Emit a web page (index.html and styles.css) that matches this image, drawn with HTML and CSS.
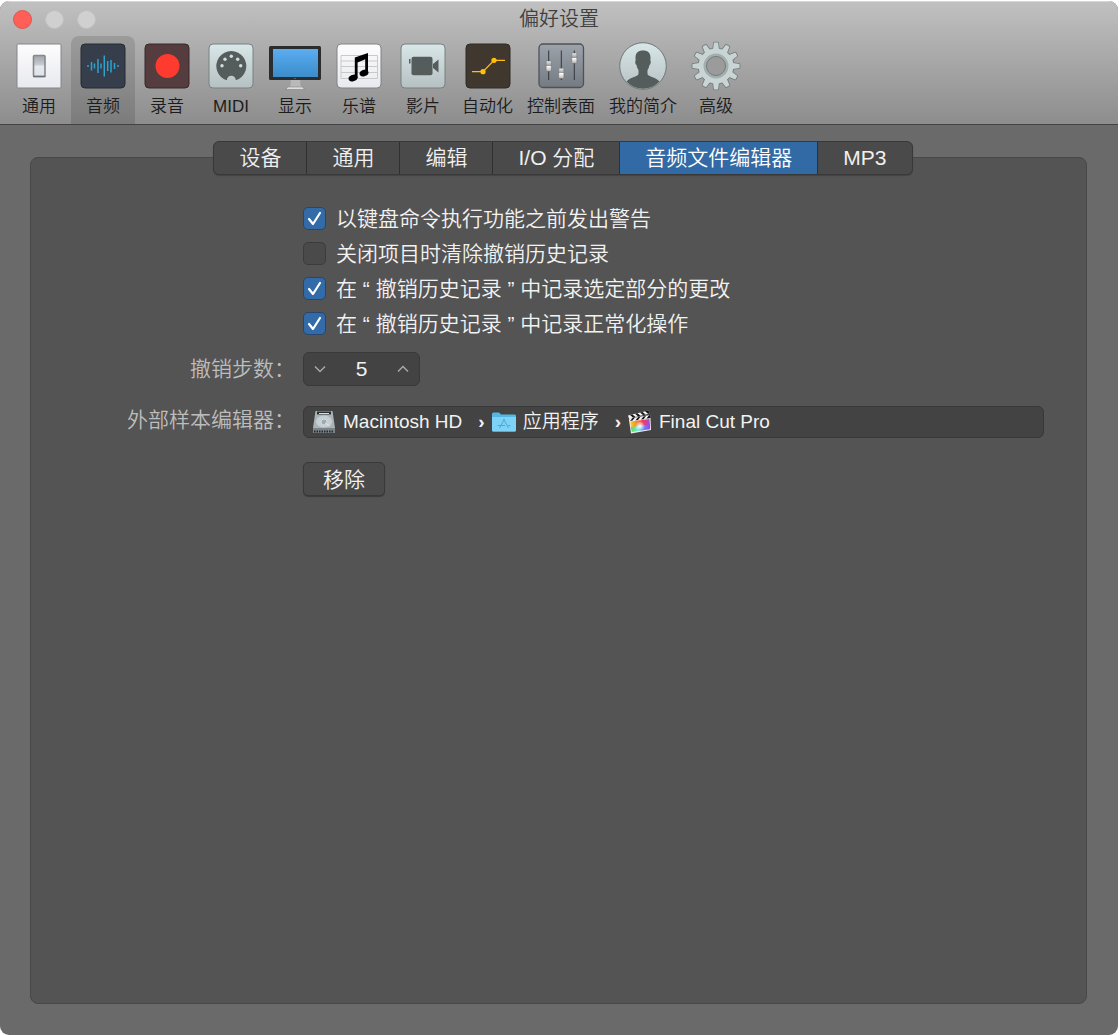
FILE: index.html
```
<!DOCTYPE html>
<html lang="zh-CN">
<head>
    <meta charset="UTF-8">
    <meta name="viewport" content="width=device-width, initial-scale=1.0">
    <title>偏好设置</title>
    <link rel="stylesheet" href="styles.css">
</head>
<body>

<div class="window">

    <header class="header">
        <div class="titlebar">
            <div class="lights">
                <button class="light close" aria-label="关闭"></button>
                <button class="light" aria-label="最小化"></button>
                <button class="light" aria-label="缩放"></button>
            </div>
            <h1 class="title">偏好设置</h1>
        </div>

        <nav class="toolbar">
            <button class="tool">
                <svg width="50" height="50" viewBox="0 0 50 50">
                    <defs>
                        <linearGradient id="white" x1="0" y1="0" x2="0" y2="1"><stop offset="0" stop-color="#fdfdfe"/><stop offset="1" stop-color="#e8e9ee"/></linearGradient>
                        <linearGradient id="pale" x1="0" y1="0" x2="0" y2="1"><stop offset="0" stop-color="#d9e7e9"/><stop offset="1" stop-color="#b5c0c1"/></linearGradient>
                        <linearGradient id="metal" x1="0" y1="0" x2="0" y2="1"><stop offset="0" stop-color="#9fa3aa"/><stop offset=".45" stop-color="#c9ccd2"/><stop offset=".5" stop-color="#e6e9ee"/><stop offset="1" stop-color="#dde3ea"/></linearGradient>
                        <linearGradient id="blue" x1="0" y1="0" x2="0" y2="1"><stop offset="0" stop-color="#5cadf0"/><stop offset="1" stop-color="#3a8ccb"/></linearGradient>
                        <linearGradient id="slate" x1="0" y1="0" x2="0" y2="1"><stop offset="0" stop-color="#9da3ab"/><stop offset="1" stop-color="#747a82"/></linearGradient>
                        <linearGradient id="knob" x1="0" y1="0" x2="0" y2="1"><stop offset="0" stop-color="#eee"/><stop offset=".45" stop-color="#999"/><stop offset=".5" stop-color="#fff"/><stop offset="1" stop-color="#b5b5b5"/></linearGradient>
                    </defs>
                    <rect x="3" y="3" width="44" height="44" rx="1" fill="url(#white)" stroke="#85868a"/>
                    <rect x="19.5" y="14.5" width="11.5" height="21" rx="1" fill="url(#metal)" stroke="#85888d" stroke-width="1.6"/>
                    <path d="M19 35.5h12.5" stroke="#6d7076" stroke-width="1.5"/>
                </svg>
                <span>通用</span>
            </button>
            <button class="tool active">
                <svg width="50" height="50" viewBox="0 0 50 50">
                    <rect x="3" y="3" width="44" height="44" rx="4" fill="#353e4a" stroke="#252b33"/>
                    <path d="M10 24v2M13.500 21v8.500M16.500 22.500v5M20 18v14M23 22.500v5M26.300 14.500v21M29.700 20v10M33 19v12.500M36.500 22v6M40 24v2" stroke="#2fa3cf" stroke-width="1.500" fill="none"/>
                </svg>
                <span>音频</span>
            </button>
            <button class="tool">
                <svg width="50" height="50" viewBox="0 0 50 50">
                    <rect x="3" y="3" width="44" height="44" rx="4" fill="#543c3f" stroke="#38282b"/>
                    <circle cx="25.500" cy="25" r="12" fill="#ff3b30"/>
                </svg>
                <span>录音</span>
            </button>
            <button class="tool">
                <svg width="50" height="50" viewBox="0 0 50 50">
                    <rect x="3" y="3" width="44" height="44" rx="4" fill="url(#pale)" stroke="#788081"/>
                    <path d="M20.800 39.300A15 15 0 1 1 29.800 39.300A4.500 4.500 0 0 0 20.800 39.300Z" fill="#545d5c"/>
                    <g fill="#d3dddd">
                        <circle cx="16" cy="24.700" r="1.700"/><circle cx="19" cy="18.300" r="1.700"/><circle cx="25.300" cy="15.300" r="1.700"/><circle cx="31.700" cy="18.300" r="1.700"/><circle cx="34.700" cy="24.700" r="1.700"/>
                    </g>
                </svg>
                <span>MIDI</span>
            </button>
            <button class="tool display">
                <svg width="52" height="50" viewBox="0 0 52 50">
                    <path d="M21.700 38h9.600v6l2.700 3H19l2.700-3z" fill="#b9b9b9"/>
                    <path d="M19 46h14.500l2 2.500h-19z" fill="#dedede" stroke="#777" stroke-width=".5"/>
                    <rect x="0" y="5" width="52" height="34" rx="1.500" fill="#2b2c2d"/>
                    <rect x="4" y="8" width="45" height="28" fill="url(#blue)"/>
                    <circle cx="26" cy="37.500" r=".6" fill="#999"/>
                </svg>
                <span>显示</span>
            </button>
            <button class="tool">
                <svg width="50" height="50" viewBox="0 0 50 50">
                    <rect x="3" y="3" width="44" height="44" rx="4" fill="url(#white)" stroke="#828282"/>
                    <path d="M7 14.500h36.500v23H7zM7 20h36.500M7 25.500h36.500M7 31.500h36.500" fill="none" stroke="#c9c9c9"/>
                    <path d="M20.800 16.500L34 12v20h-2.800V18.300L23.600 21.500V37h-2.800z"/>
                    <ellipse cx="19" cy="37" rx="4.600" ry="3.200" transform="rotate(-20 19 37)"/>
                    <ellipse cx="30" cy="32" rx="4.600" ry="3.200" transform="rotate(-20 30 32)"/>
                </svg>
                <span>乐谱</span>
            </button>
            <button class="tool">
                <svg width="50" height="50" viewBox="0 0 50 50">
                    <rect x="3" y="3" width="44" height="44" rx="4" fill="url(#pale)" stroke="#788081"/>
                    <g fill="#545d5c">
                        <rect x="13.500" y="15.700" width="21" height="18.500" rx="2"/>
                        <path d="M11 18h1.500v4.500H11zM35 23l5.500-4.500v13L35 27z"/>
                    </g>
                </svg>
                <span>影片</span>
            </button>
            <button class="tool">
                <svg width="50" height="50" viewBox="0 0 50 50">
                    <rect x="3" y="3" width="44" height="44" rx="4" fill="#40382f" stroke="#2e2a26"/>
                    <path d="M9 30.700h11l11-11.400h11" stroke="#ffbf0a" stroke-width="1.300" fill="none"/>
                    <circle cx="20" cy="30.700" r="2.600" fill="#ffbf0a"/>
                    <circle cx="31" cy="19.300" r="2.600" fill="#ffbf0a"/>
                </svg>
                <span>自动化</span>
            </button>
            <button class="tool">
                <svg width="50" height="50" viewBox="0 0 50 50">
                    <rect x="3" y="3" width="44.500" height="43.500" rx="4" fill="url(#slate)" stroke="#4d5258" stroke-width="1.300"/>
                    <path d="M12.700 9.500V39M25.300 9.500V39M38.300 9.500V39" stroke="#33373c"/>
                    <g fill="url(#knob)" stroke="#666" stroke-width=".4">
                        <rect x="10.200" y="20" width="5" height="10.300" rx=".8"/>
                        <rect x="22.800" y="27.300" width="5" height="10.300" rx=".8"/>
                        <rect x="35.800" y="12" width="5" height="10.300" rx=".8"/>
                    </g>
                </svg>
                <span>控制表面</span>
            </button>
            <button class="tool">
                <svg width="50" height="50" viewBox="0 0 50 50">
                    <defs>
                        <clipPath id="face"><circle cx="25" cy="25" r="22.800"/></clipPath>
                    </defs>
                    <circle cx="25" cy="25" r="23.300" fill="url(#pale)" stroke="#6f7777"/>
                    <path clip-path="url(#face)" d="M25 9.500c5 0 7.800 2.500 7.500 8l-.2 2c1 .6.300 4-.8 4.500-.5 2.500-1.200 4-2 5v4c.5 2.500 9 3.500 12 7.500-3 4-10 7.500-16.500 7.500s-13.500-3.500-16.500-7.500c3-4 11.500-5 12-7.500v-4c-.8-1-1.500-2.500-2-5-1.100-.5-1.800-3.900-.8-4.500l-.2-2c-.3-5.500 2.500-8 7.500-8z" fill="#545d5c"/>
                </svg>
                <span>我的简介</span>
            </button>
            <button class="tool">
                <svg width="50" height="50" viewBox="0 0 50 50">
                    <defs>
                        <path id="tooth" d="M21.800 10l1.200-8.500h4l1.200 8.500z"/>
                        <g id="teeth">
                            <use href="#tooth"/>
                            <use href="#tooth" transform="rotate(30 25 25)"/>
                            <use href="#tooth" transform="rotate(60 25 25)"/>
                            <use href="#tooth" transform="rotate(90 25 25)"/>
                            <use href="#tooth" transform="rotate(120 25 25)"/>
                            <use href="#tooth" transform="rotate(150 25 25)"/>
                            <use href="#tooth" transform="rotate(180 25 25)"/>
                            <use href="#tooth" transform="rotate(210 25 25)"/>
                            <use href="#tooth" transform="rotate(240 25 25)"/>
                            <use href="#tooth" transform="rotate(270 25 25)"/>
                            <use href="#tooth" transform="rotate(300 25 25)"/>
                            <use href="#tooth" transform="rotate(330 25 25)"/>
                            <circle cx="25" cy="25" r="17.500"/>
                        </g>
                    </defs>
                    <use href="#teeth" fill="#737b7b" stroke="#737b7b" stroke-width="1.600" stroke-linejoin="round"/>
                    <use href="#teeth" fill="#c9d4d5"/>
                    <circle cx="25" cy="25" r="11" fill="#9b9b9b" stroke="#a3aeaf" stroke-width="3"/>
                    <circle cx="25" cy="25" r="9.500" fill="none" stroke="#737b7b"/>
                </svg>
                <span>高级</span>
            </button>
        </nav>
    </header>

    <main class="content">
        <div class="tabs" role="tablist">
            <button class="tab" role="tab">设备</button>
            <button class="tab" role="tab">通用</button>
            <button class="tab" role="tab">编辑</button>
            <button class="tab" role="tab">I/O 分配</button>
            <button class="tab active" role="tab" aria-selected="true">音频文件编辑器</button>
            <button class="tab" role="tab">MP3</button>
        </div>

        <section class="panel">
            <div class="checks">
                <label class="check"><input type="checkbox" checked>以键盘命令执行功能之前发出警告</label>
                <label class="check"><input type="checkbox">关闭项目时清除撤销历史记录</label>
                <label class="check"><input type="checkbox" checked>在 “ 撤销历史记录 ” 中记录选定部分的更改</label>
                <label class="check"><input type="checkbox" checked>在 “ 撤销历史记录 ” 中记录正常化操作</label>
            </div>

            <label class="label" for="steps">撤销步数：</label>
            <div class="stepper">
                <button aria-label="减少">
                    <svg width="14" height="14" viewBox="0 0 14 14"><path d="M2 4.500l5 5 5-5"/></svg>
                </button>
                <input type="text" id="steps" value="5">
                <button aria-label="增加">
                    <svg width="14" height="14" viewBox="0 0 14 14"><path d="M2 9.500l5-5 5 5"/></svg>
                </button>
            </div>

            <span class="label" id="editor">外部样本编辑器：</span>
            <ol class="path" aria-labelledby="editor">
                <li>
                    <svg width="24" height="24" viewBox="0 0 24 24">
                        <path d="M3.500 1h17L23 18v5H1v-5z" fill="#aab4b8"/>
                        <path d="M1 18h22v5H1z" fill="#7b8589"/>
                        <path d="M5 1.500h14v3H5z" fill="#2b3033"/>
                        <path d="M7 3.500h10" stroke="#d8dee0"/>
                        <ellipse cx="12" cy="11.500" rx="8" ry="6" fill="#c5cfd3"/>
                        <circle cx="12" cy="12" r="3" fill="#a0abb0" stroke="#e0e6e8" stroke-width=".7"/>
                        <path d="M13 13l5 3" stroke="#dfe5e7"/>
                        <path d="M2 21.500h20" stroke="#23282a" stroke-width="2" stroke-dasharray="1.500 1"/>
                    </svg>
                    Macintosh HD
                </li>
                <li>
                    <svg width="24" height="24" viewBox="0 0 24 24">
                        <path d="M0 4q0-1.500 1.500-1.500H7l2 2h13.500Q24 4.500 24 6v14q0 1.500-1.500 1.500h-21Q0 21.500 0 20z" fill="#55b8e4"/>
                        <path d="M0 7h24v13q0 1.500-1.500 1.500h-21Q0 21.500 0 20z" fill="#7dd2f7"/>
                        <path d="M11.500 9l5 9M12.500 9l-5 9M5.500 15.500h7.500M16 15.500h2.500" stroke="#4ba9d3" stroke-width="1" fill="none"/>
                    </svg>
                    应用程序
                </li>
                <li>
                    <svg width="24" height="24" viewBox="0 0 24 24">
                        <defs>
                            <linearGradient id="rainbow"><stop offset="0" stop-color="#f8d52c"/><stop offset=".35" stop-color="#f67d2c"/><stop offset=".65" stop-color="#ef3c62"/><stop offset="1" stop-color="#9d4be8"/></linearGradient>
                            <linearGradient id="under"><stop offset="0" stop-color="#58df4d"/><stop offset=".35" stop-color="#78e9d2"/><stop offset=".6" stop-color="#5c9bf5"/><stop offset="1" stop-color="#a23bef"/></linearGradient>
                            <radialGradient id="glow"><stop offset="0" stop-color="#fff"/><stop offset="1" stop-color="#fff" stop-opacity="0"/></radialGradient>
                        </defs>
                        <path d="M1 10l21.500-2L23 20 3 23.500z" fill="#eee"/>
                        <path d="M2.300 11.500L21.500 9l.5 7-19 2z" fill="url(#rainbow)"/>
                        <path d="M2.800 17L22 14.500v4.700L3.800 22z" fill="url(#under)"/>
                        <circle cx="12" cy="16" r="5" fill="url(#glow)"/>
                        <path d="M0 5.500L20.500.5l1 3L1 8.500zM1 8.500L22.500 5v3L1.500 11z" fill="#f5f5f5"/>
                        <path d="M2 5l3 2.500 2.500-.6-3-2.500zM7 3.800l3 2.500 2.500-.6-3-2.500zM12 2.500l3 2.600 2.500-.6-3-2.500zM17 1.300l3 2.500 1.500-.3-1-3zM2 11l2.500-3 2.500-.4-2.500 3zM7.500 10.300L10 7.200l2.500-.4L10 10zM13 9.600l2.500-3.200L18 6l-2.500 3.300zM18.500 8.600L21 5.300l1.500-.3v3z" fill="#111"/>
                    </svg>
                    Final Cut Pro
                </li>
            </ol>

            <button class="remove">移除</button>
        </section>
    </main>

</div>

</body>
</html>
```
FILE: styles.css
```
* {
    box-sizing: border-box;
}

body {
    margin: 0;
    padding: 1px 2px 0 0;
    background: #fff;
    font-family: "Liberation Sans", "Noto Sans CJK SC", sans-serif;
    font-weight: 350;
}

button, input {
    font: inherit;
    color: inherit;
    border: none;
    padding: 0;
    background: none;
}

.window {
    display: flex;
    flex-direction: column;
    min-height: calc(100vh - 1px);
    background: #6a6a6a;
    border-radius: 9px;
    overflow: hidden;
}

/* title bar + toolbar */

.header {
    background: linear-gradient(#c0c0c0, #8d8d8d);
    border-top: 1px solid #d6d6d6;
    border-bottom: 1px solid #434343;
}

.titlebar {
    display: grid;
    grid-template-columns: 1fr auto 1fr;
    align-items: center;
    height: 34px;
    padding: 0 13px;
}

.lights {
    display: flex;
    gap: 13px;
}

.light {
    width: 19px;
    height: 19px;
    border-radius: 50%;
    background: #d0d0d0;
    border: 1px solid #c0c0c0;
}

.light.close {
    background: #ff5f57;
    border-color: #e2544d;
}

.title {
    margin: 0;
    font-size: 20px;
    font-weight: 350;
    line-height: 34px;
    color: #404040;
}

.toolbar {
    display: flex;
    padding: 0 7px;
}

.tool {
    display: flex;
    flex-direction: column;
    align-items: center;
    gap: 4px;
    min-width: 64px;
    height: 88px;
    padding: 5px 7px 0;
    font-size: 17px;
    line-height: 24px;
    color: #1c1c1c;
    white-space: nowrap;
}

.tool svg {
    flex: none;
}

.tool.display {
    padding: 5px 6px 0;
}

.tool.active {
    background: rgba(0, 0, 0, 0.12);
    border-radius: 8px 8px 0 0;
}

/* tabs sit on the top edge of the panel */

.content {
    display: flex;
    flex-direction: column;
    flex: 1;
    padding: 16px 31px 31px 30px;
}

.tabs {
    display: flex;
    align-self: center;
    z-index: 1;
    margin: 0 0 -18px 9px;
    border: 1px solid #383838;
    border-radius: 6px;
    background: #4a4a4a;
    box-shadow: 0 1px 1px rgba(0, 0, 0, 0.2);
    overflow: hidden;
}

.tab {
    min-width: 92px;
    height: 32px;
    padding: 0 25px;
    font-size: 21px;
    line-height: 32px;
    color: #f0f0f0;
    border-left: 1px solid #303030;
}

.tab:first-child {
    border-left: none;
}

.tab.active {
    background: #326aa6;
    color: #fff;
}

.panel {
    flex: 1;
    display: grid;
    grid-template-columns: 264px 1fr;
    grid-auto-rows: max-content;
    align-content: start;
    align-items: center;
    column-gap: 8px;
    padding: 43px 42px 20px 0;
    background: #545454;
    border: 1px solid #484848;
    border-radius: 8px;
    font-size: 21px;
    color: #f2f2f2;
}

.checks {
    grid-column: 2;
    display: grid;
    margin-bottom: 11px;
}

.check {
    display: flex;
    align-items: center;
    gap: 10px;
    height: 35px;
    line-height: 35px;
}

.check input {
    appearance: none;
    width: 23px;
    height: 23px;
    margin: 0;
    background: #4a4a4a;
    border: 1px solid #3c3c3c;
    border-radius: 5px;
}

.check input:checked {
    border-color: #27466b;
    background: #336ba8 url("data:image/svg+xml,%3Csvg xmlns='http://www.w3.org/2000/svg' viewBox='0 0 21 21'%3E%3Cpath d='M5 11l4 5L16 5' fill='none' stroke='white' stroke-width='2.200' stroke-linecap='round' stroke-linejoin='round'/%3E%3C/svg%3E");
}

.label {
    justify-self: end;
    white-space: nowrap;
    line-height: 32px;
    color: #bdbdbd;
}

.stepper {
    justify-self: start;
    display: flex;
    align-items: center;
    width: 117px;
    height: 34px;
    background: #434343;
    border: 1px solid #393939;
    border-radius: 6px;
}

.stepper input {
    flex: 1;
    min-width: 0;
    text-align: center;
}

.stepper button {
    display: flex;
    align-items: center;
    justify-content: center;
    width: 32px;
    height: 32px;
}

.stepper path {
    fill: none;
    stroke: #a8a8a8;
    stroke-width: 1.5;
}

.path {
    display: flex;
    align-items: center;
    height: 32px;
    margin: 20px 0 16px;
    padding: 0 8px;
    list-style: none;
    font-size: 19px;
    background: #434343;
    border: 1px solid #383838;
    border-radius: 6px;
}

.path li {
    display: flex;
    align-items: center;
    gap: 7px;
    line-height: 30px;
    white-space: nowrap;
}

.path li + li::before {
    content: "›";
    margin-left: 16px;
    font-weight: 700;
}

.remove {
    grid-column: 2;
    justify-self: start;
    height: 34px;
    margin-top: 8px;
    padding: 0 19px;
    line-height: 34px;
    background: #4a4a4a;
    border: 1px solid #393939;
    border-radius: 5px;
    box-shadow: 0 1px 1px rgba(0, 0, 0, 0.3);
}
```
